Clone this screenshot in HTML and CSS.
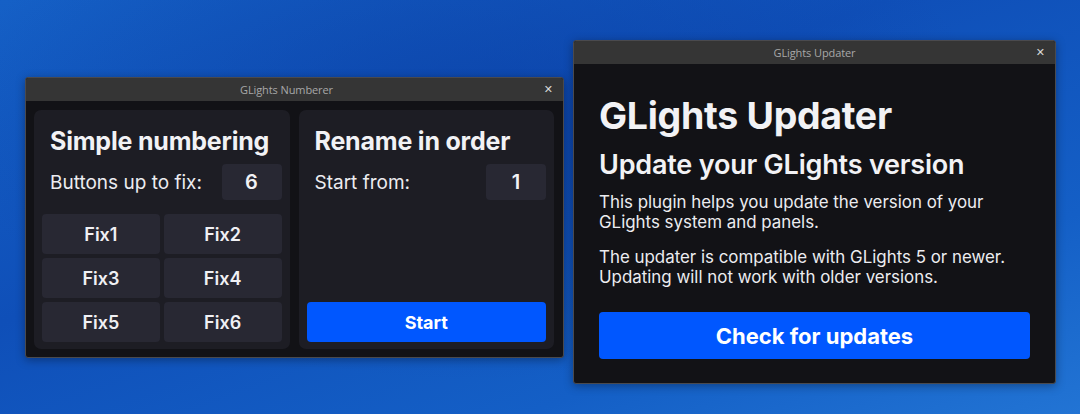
FILE: index.html
```html
<!DOCTYPE html>
<html>
<head>
<meta charset="utf-8">
<link rel="stylesheet" href="styles.css">
</head>
<body>
<div class="desktop">
  <div class="window win-numberer">
    <div class="titlebar titlebar-offset">
      <span class="title">GLights Numberer</span>
      <span class="close">✕</span>
    </div>
    <div class="win-body numberer-body">
      <section class="panel">
        <h2 class="panel-title">Simple numbering</h2>
        <div class="field-row">
          <span class="field-label">Buttons up to fix:</span>
          <span class="field-input">6</span>
        </div>
        <div class="fix-grid">
          <button class="fix-btn">Fix1</button>
          <button class="fix-btn">Fix2</button>
          <button class="fix-btn">Fix3</button>
          <button class="fix-btn">Fix4</button>
          <button class="fix-btn">Fix5</button>
          <button class="fix-btn">Fix6</button>
        </div>
      </section>
      <section class="panel">
        <h2 class="panel-title">Rename in order</h2>
        <div class="field-row">
          <span class="field-label">Start from:</span>
          <span class="field-input">1</span>
        </div>
        <div class="spacer"></div>
        <button class="primary-btn start-btn">Start</button>
      </section>
    </div>
  </div>

  <div class="window win-updater">
    <div class="titlebar">
      <span class="title">GLights Updater</span>
      <span class="close">✕</span>
    </div>
    <div class="win-body updater-body">
      <h1 class="upd-title">GLights Updater</h1>
      <h2 class="upd-sub">Update your GLights version</h2>
      <p class="upd-text">This plugin helps you update the version of your GLights system and panels.</p>
      <p class="upd-text">The updater is compatible with GLights 5 or newer. Updating will not work with older versions.</p>
      <button class="primary-btn check-btn">Check for updates</button>
    </div>
  </div>
</div>
</body>
</html>
```

FILE: styles.css
```css
* { box-sizing: border-box; }
html, body { margin: 0; padding: 0; }
body {
  width: 1080px;
  height: 414px;
  overflow: hidden;
  font-family: Inter, "Noto Sans", sans-serif;
  color: #f2f2f5;
}
.desktop {
  position: relative;
  width: 1080px;
  height: 414px;
  background:
    radial-gradient(ellipse 520px 260px at 470px 120px, rgba(10, 60, 160, 0.55), rgba(10, 60, 160, 0) 100%),
    linear-gradient(160deg, #1560c6 0%, #0f4fb8 40%, #145fc6 75%, #2274d4 100%);
}
.window {
  position: absolute;
  display: flex;
  flex-direction: column;
  background: #121216;
  border: 1px solid #4a4a4e;
  border-radius: 3px;
  box-shadow: 0 2px 10px rgba(0, 0, 0, 0.35);
  overflow: hidden;
}
.win-numberer { left: 25px; top: 77px; width: 539px; height: 281px; }
.win-updater { left: 573px; top: 40px; width: 483px; height: 344px; }
.titlebar {
  position: relative;
  height: 23px;
  flex: none;
  background: #353535;
  display: flex;
  align-items: center;
  justify-content: center;
}
.titlebar-offset { padding-right: 16px; }
.title {
  font-family: "Open Sans", "Noto Sans", sans-serif;
  font-size: 11px;
  color: #a8a8a8;
  letter-spacing: -0.1px;
}
.close {
  position: absolute;
  right: 10px;
  top: 5px;
  font-size: 11px;
  color: #d8d8d8;
  font-family: "DejaVu Sans", sans-serif;
}
.win-body { flex: 1; }
.numberer-body {
  display: flex;
  gap: 9px;
  padding: 9px 9px 9px 8px;
}
.panel {
  flex: 1;
  display: flex;
  flex-direction: column;
  background: #1d1d24;
  border-radius: 7px;
  padding: 11px 8px 7px 8px;
}
.panel-title {
  margin: 0 0 0 8px;
  font-size: 25px;
  font-weight: 700;
  line-height: 40px;
  height: 43px;
  letter-spacing: -0.2px;
}
.field-row {
  display: flex;
  align-items: center;
  justify-content: space-between;
  height: 36px;
  padding-left: 8px;
}
.field-label {
  font-size: 19px;
  font-weight: 400;
  color: #ececf0;
}
.field-input {
  width: 60px;
  height: 36px;
  background: #282833;
  border-radius: 4px;
  display: flex;
  align-items: center;
  justify-content: center;
  font-size: 20px;
  font-weight: 600;
}
.fix-grid {
  margin-top: 14px;
  display: grid;
  grid-template-columns: 1fr 1fr;
  grid-auto-rows: 40px;
  gap: 4px;
}
.fix-btn {
  border: 0;
  background: #282833;
  border-radius: 4px;
  color: #f0f0f4;
  font-family: Inter, "Noto Sans", sans-serif;
  font-size: 18px;
  font-weight: 600;
  padding: 0;
}
.spacer { flex: 1; }
.primary-btn {
  border: 0;
  background: #0057ff;
  color: #ffffff;
  font-family: Inter, "Noto Sans", sans-serif;
  font-weight: 700;
  border-radius: 4px;
  padding: 0;
}
.start-btn {
  height: 40px;
  font-size: 18px;
}
.updater-body {
  display: flex;
  flex-direction: column;
  padding: 0 25px 0 25px;
}
.upd-title {
  margin: 0;
  margin-top: 30px;
  font-size: 37.5px;
  font-weight: 700;
  line-height: 44px;
  letter-spacing: -0.3px;
}
.upd-sub {
  margin: 11px 0 0 0;
  font-size: 27px;
  font-weight: 600;
  line-height: 32px;
  letter-spacing: -0.2px;
}
.upd-text {
  margin: 11px 0 0 0;
  font-size: 16.9px;
  line-height: 20px;
  color: #ececf0;
  width: 430px;
}
.upd-text + .upd-text { margin-top: 15px; }
.check-btn {
  margin-top: 25px;
  height: 47px;
  font-size: 22px;
}
```
